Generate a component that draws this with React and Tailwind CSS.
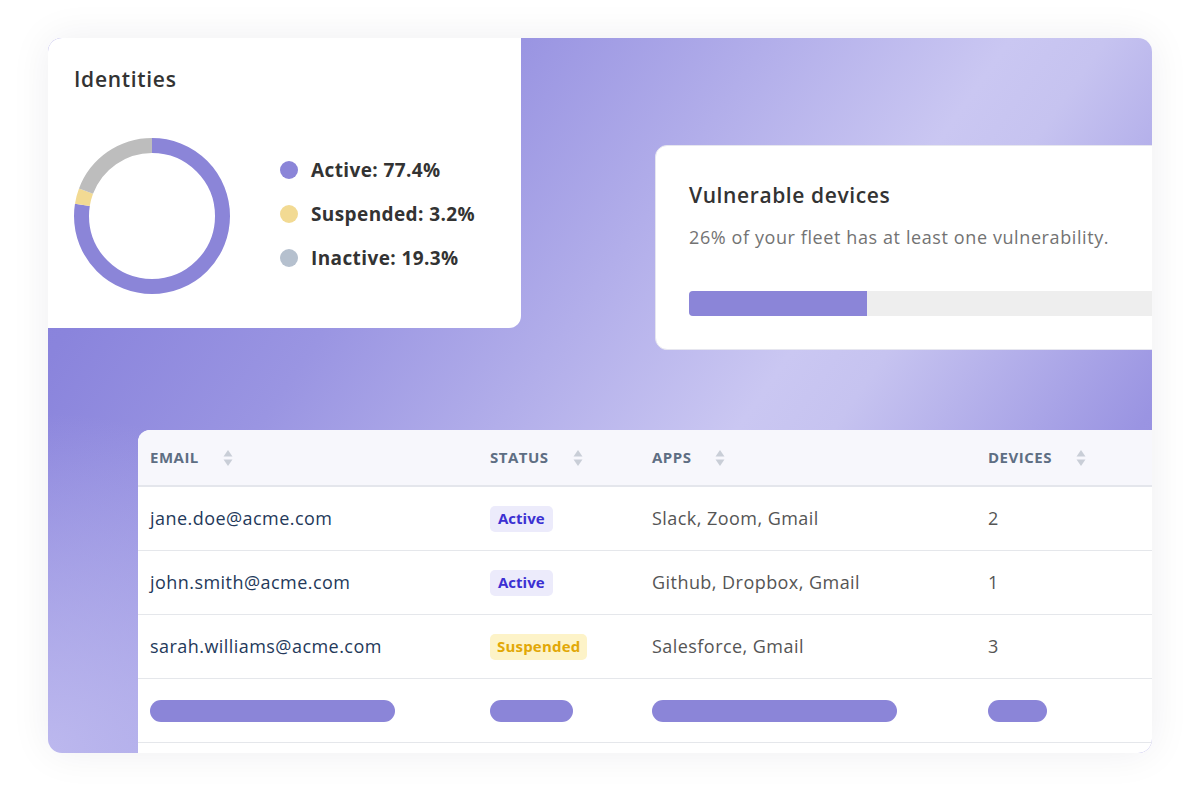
import React from "react";

const users = [
  { email: "jane.doe@acme.com", status: "Active", apps: "Slack, Zoom, Gmail", devices: 2 },
  { email: "john.smith@acme.com", status: "Active", apps: "Github, Dropbox, Gmail", devices: 1 },
  { email: "sarah.williams@acme.com", status: "Suspended", apps: "Salesforce, Gmail", devices: 3 },
];

const SortIcon = () => (
  <svg width="10" height="18" viewBox="0 0 10 18" className="ml-6">
    <path d="M5 1 L9.5 7.5 H0.5 Z" fill="#c9ced7" />
    <path d="M5 17 L9.5 10.5 H0.5 Z" fill="#c9ced7" />
  </svg>
);

const Donut = () => {
  const r = 70.5;
  const c = 2 * Math.PI * r;
  const segs = [
    { pct: 0.774, color: "#8b85d8" },
    { pct: 0.032, color: "#f2da93" },
    { pct: 0.194, color: "#bdbdbd" },
  ];
  let offset = 0;
  return (
    <svg width="156" height="156" viewBox="0 0 156 156" className="shrink-0">
      <g transform="rotate(-90 78 78)">
        {segs.map((s) => {
          const len = s.pct * c;
          const el = (
            <circle
              key={s.color}
              cx="78"
              cy="78"
              r={r}
              fill="none"
              stroke={s.color}
              strokeWidth="15"
              strokeDasharray={`${len} ${c - len}`}
              strokeDashoffset={-offset}
            />
          );
          offset += len;
          return el;
        })}
      </g>
    </svg>
  );
};

const Legend = ({ color, label }) => (
  <div className="flex items-center gap-[13px] h-[22px]">
    <span className={`w-[18px] h-[18px] rounded-full ${color}`} />
    <span className="text-[19px] font-bold text-[#333333] tracking-[0.4px]">{label}</span>
  </div>
);

const Badge = ({ status }) =>
  status === "Active" ? (
    <span className="inline-flex items-center h-[26px] px-[8px] rounded-[5px] bg-[#ecebfb] text-[#3c30d2] text-[15px] font-bold">
      Active
    </span>
  ) : (
    <span className="inline-flex items-center h-[26px] px-[7px] rounded-[5px] bg-[#fdf3c8] text-[#e2a807] text-[15px] font-bold tracking-[0.2px]">
      Suspended
    </span>
  );

const cols = "grid grid-cols-[340px_162px_336px_1fr]";
const cell = "pl-[12px] text-[18px] tracking-[0.45px]";

export default function App() {
  return (
    <div
      className="w-[1200px] h-[812px] bg-white pt-[38px] px-[48px]"
      style={{ fontFamily: "'Open Sans', Lato, sans-serif" }}
    >
      <div className="relative h-[715px] rounded-[14px] overflow-hidden shadow-[0_0_40px_rgba(30,30,60,0.07)] bg-[radial-gradient(circle_at_0%_100%,#bcb8ee_0px,rgba(188,184,238,0)_340px),linear-gradient(125deg,#857fdb_0%,#8a84dc_14%,#9a95e2_30%,#cac7f2_60%,#c6c3f0_66%,#9a94e2_85%,#8f89de_100%)]">
        {/* top row */}
        <div className="flex items-start">
          <div className="w-[473px] h-[290px] shrink-0 bg-white rounded-br-[12px] pl-[26px] pt-[27px]">
            <h2 className="text-[21px] font-semibold text-[#333333] leading-[28px] tracking-[0.7px]">Identities</h2>
            <div className="flex items-center mt-[45px]">
              <Donut />
              <div className="flex flex-col gap-[22px] ml-[50px] -mt-[4px]">
                <Legend color="bg-[#8b85d8]" label="Active: 77.4%" />
                <Legend color="bg-[#f2da93]" label="Suspended: 3.2%" />
                <Legend color="bg-[#b5c0ce]" label="Inactive: 19.3%" />
              </div>
            </div>
          </div>
          <div className="w-[560px] h-[205px] shrink-0 ml-[134px] mt-[107px] bg-white rounded-l-[12px] border border-[#e6e6ef] pl-[33px] pt-[35px]">
            <h3 className="text-[21px] font-semibold text-[#333333] leading-[28px] tracking-[0.6px]">Vulnerable devices</h3>
            <p className="mt-[16px] text-[18px] text-[#737373] leading-[24px] tracking-[0.6px]">
              26% of your fleet has at least one vulnerability.
            </p>
            <div className="mt-[42px] h-[25px] bg-[#eeeeee] rounded-l-[4px] overflow-hidden">
              <div className="h-full w-[178px] bg-[#8b85d8]" />
            </div>
          </div>
        </div>

        {/* table */}
        <div className="ml-[90px] mt-[80px] w-[1100px] bg-white rounded-tl-[12px] overflow-hidden">
          <div className={`${cols} h-[57px] items-center bg-[#f7f7fc] border-b-2 border-[#e4e6ec]`}>
            {["EMAIL", "STATUS", "APPS", "DEVICES"].map((h) => (
              <div key={h} className="flex items-center pl-[12px]">
                <span className="text-[15px] font-bold tracking-[0.5px] text-[#5e6e83]">{h}</span>
                <SortIcon />
              </div>
            ))}
          </div>
          {users.map((u) => (
            <div key={u.email} className={`${cols} h-[64px] items-center border-b border-[#e5e7eb]`}>
              <div className={`${cell} text-[#24395a]`}>{u.email}</div>
              <div className="pl-[12px]">
                <Badge status={u.status} />
              </div>
              <div className={`${cell} text-[#555555]`}>{u.apps}</div>
              <div className={`${cell} text-[#555555]`}>{u.devices}</div>
            </div>
          ))}
          <div className={`${cols} h-[64px] items-center border-b border-[#e5e7eb]`}>
            <div className="pl-[12px]">
              <div className="w-[245px] h-[22px] rounded-full bg-[#8b85d8]" />
            </div>
            <div className="pl-[12px]">
              <div className="w-[83px] h-[22px] rounded-full bg-[#8b85d8]" />
            </div>
            <div className="pl-[12px]">
              <div className="w-[245px] h-[22px] rounded-full bg-[#8b85d8]" />
            </div>
            <div className="pl-[12px]">
              <div className="w-[59px] h-[22px] rounded-full bg-[#8b85d8]" />
            </div>
          </div>
          <div className="h-[64px]" />
        </div>
      </div>
    </div>
  );
}
